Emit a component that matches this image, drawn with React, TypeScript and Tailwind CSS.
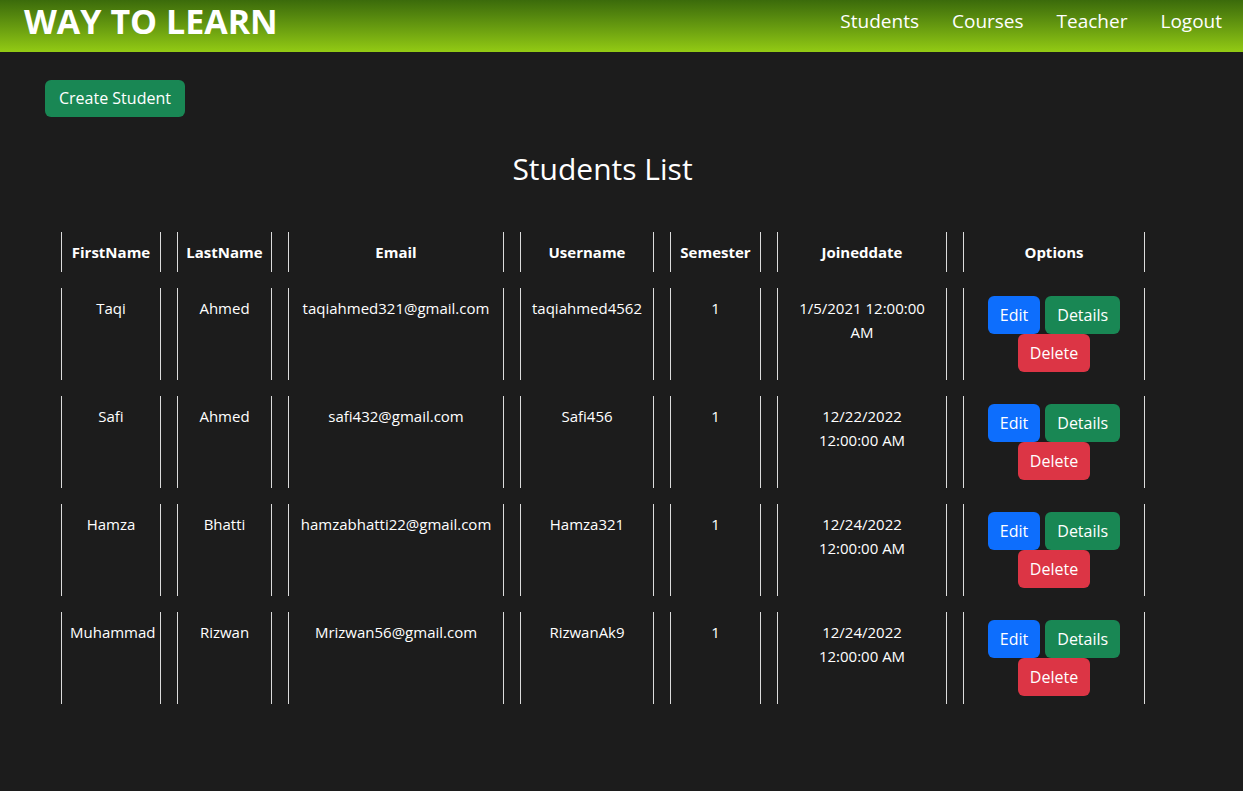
const students = [
  { first: "Taqi", last: "Ahmed", email: "taqiahmed321@gmail.com", user: "taqiahmed4562", sem: 1, joined: ["1/5/2021 12:00:00", "AM"] },
  { first: "Safi", last: "Ahmed", email: "safi432@gmail.com", user: "Safi456", sem: 1, joined: ["12/22/2022", "12:00:00 AM"] },
  { first: "Hamza", last: "Bhatti", email: "hamzabhatti22@gmail.com", user: "Hamza321", sem: 1, joined: ["12/24/2022", "12:00:00 AM"] },
  { first: "Muhammad", last: "Rizwan", email: "Mrizwan56@gmail.com", user: "RizwanAk9", sem: 1, joined: ["12/24/2022", "12:00:00 AM"] },
];

const cell = "border-x border-[#dcdcdc] px-2 py-2 align-top text-center leading-6";

export default function App() {
  return (
    <div className="min-h-[791px] w-full bg-[#1c1c1c] text-white font-['Comic_Sans_MS','Open_Sans',sans-serif]">
      <nav className="h-[52px] flex items-center justify-between pl-6 pr-[21px] pb-[11px] bg-gradient-to-b from-[#3b6b0b] to-[#93cb14]">
        <span className="text-[34px] font-bold leading-[40px]">WAY TO LEARN</span>
        <div className="flex gap-[33px] text-[19px] leading-6">
          <a>Students</a>
          <a>Courses</a>
          <a>Teacher</a>
          <a>Logout</a>
        </div>
      </nav>

      <div className="ml-[45px] w-[1115px] pt-7">
        <button className="bg-[#198754] text-white text-[16px] rounded-md px-[14px] py-[6px] leading-[25px]">
          Create Student
        </button>

        <h2 className="text-center text-[30px] mt-[32px] leading-10">Students List</h2>

        <table className="mt-[27px] w-[1115px] border-separate border-spacing-4 table-fixed text-[15px]">
          <thead>
            <tr className="font-bold text-[15px]">
              <th className={cell + " w-[100px]"}>FirstName</th>
              <th className={cell + " w-[95px]"}>LastName</th>
              <th className={cell + " w-[216px]"}>Email</th>
              <th className={cell + " w-[134px]"}>Username</th>
              <th className={cell + " w-[91px]"}>Semester</th>
              <th className={cell + " w-[170px]"}>Joineddate</th>
              <th className={cell + " w-[182px]"}>Options</th>
            </tr>
          </thead>
          <tbody>
            {students.map((s) => (
              <tr key={s.email} className="h-[92px]">
                <td className={cell}>{s.first}</td>
                <td className={cell}>{s.last}</td>
                <td className={cell}>{s.email}</td>
                <td className={cell}>{s.user}</td>
                <td className={cell}>{s.sem}</td>
                <td className={cell}>
                  {s.joined[0]}
                  <br />
                  {s.joined[1]}
                </td>
                <td className={cell}>
                  <div className="flex flex-wrap justify-center gap-x-[5px] text-[16px]">
                    <button className="bg-[#0d6efd] rounded-md px-3 py-[6px] leading-[26px]">Edit</button>
                    <button className="bg-[#198754] rounded-md px-3 py-[6px] leading-[26px]">Details</button>
                    <button className="bg-[#dc3545] rounded-md px-3 py-[6px] leading-[26px]">Delete</button>
                  </div>
                </td>
              </tr>
            ))}
          </tbody>
        </table>
      </div>
    </div>
  );
}
